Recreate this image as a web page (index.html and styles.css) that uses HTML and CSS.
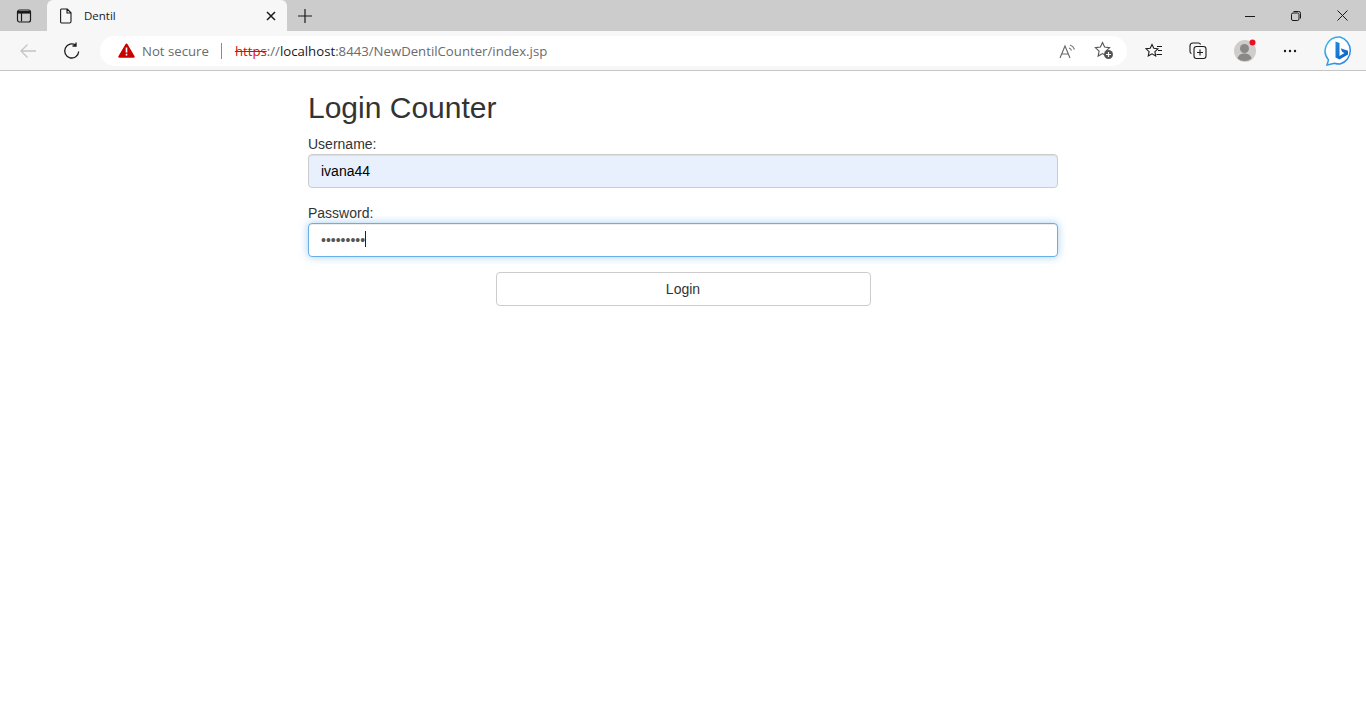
FILE: index.html
```html
<!DOCTYPE html>
<html lang="en">
<head>
    <meta charset="UTF-8">
    <title>Dentil</title>
    <link rel="stylesheet" href="styles.css">
</head>
<body>
    <div class="tabstrip">
        <div class="tab-actions">
            <svg class="icon" width="16" height="16" viewBox="0 0 16 16"><rect x="1.5" y="2" width="13" height="12" rx="2" fill="none" stroke="#1a1a1a" stroke-width="1.2"/><path d="M2 3h12v2.6H2z" fill="#1a1a1a"/><path d="M5.5 5v8.5" stroke="#1a1a1a" stroke-width="1.2"/></svg>
        </div>
        <div class="tab">
            <svg class="tab-page" width="12" height="16" viewBox="0 0 12 16"><path d="M1.5 1h5.8L11 4.8V13.5a1.5 1.5 0 0 1-1.5 1.5h-8A1 1 0 0 1 .6 14V2A1 1 0 0 1 1.5 1zM7 1v4h4" fill="none" stroke="#1a1a1a" stroke-width="1.1"/></svg>
            <span class="tab-title">Dentil</span>
            <svg class="tab-close" width="10" height="10" viewBox="0 0 10 10"><path d="M1 1l8 8M9 1l-8 8" stroke="#1a1a1a" stroke-width="1.5"/></svg>
        </div>
        <svg class="new-tab" width="14" height="14" viewBox="0 0 14 14"><path d="M7 0v14M0 7h14" stroke="#1a1a1a" stroke-width="1.2"/></svg>
        <div class="window-buttons">
            <svg width="10" height="10" viewBox="0 0 10 10"><path d="M0 5.5h10" stroke="#1a1a1a"/></svg>
            <svg width="10" height="10" viewBox="0 0 10 10"><rect x=".5" y="2" width="7.5" height="7.5" rx="1.5" fill="none" stroke="#1a1a1a"/><path d="M2.5 .5h5.2a1.8 1.8 0 0 1 1.8 1.8V7.5" fill="none" stroke="#1a1a1a"/></svg>
            <svg width="11" height="11" viewBox="0 0 11 11"><path d="M.5.5l10 10M10.500 .5l-10 10" stroke="#1a1a1a"/></svg>
        </div>
    </div>

    <div class="toolbar">
        <svg class="back" width="18" height="16" viewBox="0 0 18 16"><path d="M17 8H2M8.500 1.500L2 8l6.500 6.500" fill="none" stroke="#c4c4c4" stroke-width="1.300"/></svg>
        <svg class="reload" width="18" height="18" viewBox="0 0 18 18"><path d="M15.700 9.500A7 7 0 1 1 12.800 3.300M13 .5v3.500H9.500" fill="none" stroke="#1a1a1a" stroke-width="1.300"/></svg>
        <div class="addressbar">
            <svg class="warn" width="17" height="15" viewBox="0 0 17 15"><path d="M8.500 .5a1 1 0 0 1 .9.5l7.200 12.300a1 1 0 0 1-.9 1.500H1.300a1 1 0 0 1-.9-1.500L7.600 1a1 1 0 0 1 .9-.5z" fill="#c80000"/><path d="M7.700 4.500h1.600v5H7.700zM7.700 10.800h1.600v1.700H7.700z" fill="#fff"/></svg>
            <span class="not-secure">Not secure</span>
            <span class="addr-sep"></span>
            <span class="url"><s class="url-https">https</s><span class="url-dim">://</span><span class="url-host">localhost</span><span class="url-dim">:8443/NewDentilCounter/index.jsp</span></span>
            <div class="addr-icons">
                <svg width="18" height="16" viewBox="0 0 18 16"><path d="M1 15L6 3l5 12M2.800 11h6.400" fill="none" stroke="#666" stroke-width="1.100"/><path d="M10 5a4 4 0 0 1 2.500 2.500M11 2a7 7 0 0 1 4.500 4.500" fill="none" stroke="#777" stroke-width="1.100"/></svg>
                <svg width="20" height="19" viewBox="0 0 20 19"><path d="M8.500 1.500l2.100 4.600 5 .6-3.700 3.400 1 5-4.400-2.500-4.400 2.500 1-5L1.400 6.700l5-.6z" fill="none" stroke="#555" stroke-width="1.100"/><circle cx="14.500" cy="13.500" r="4.500" fill="#555"/><path d="M14.500 11v5M12 13.500h5" stroke="#fff" stroke-width="1.100"/></svg>
            </div>
        </div>
        <div class="tools">
            <svg class="tool-fav" width="18" height="16" viewBox="0 0 18 16"><path d="M7 1.500l1.800 3.800 4.200.5-3.100 2.900.8 4.200L7 10.800l-3.700 2.100.8-4.200L1 5.800l4.200-.5z" fill="none" stroke="#1a1a1a" stroke-width="1.100"/><path d="M12 3.500h5M13 7.500h4M11.500 11.500h5.500" stroke="#1a1a1a" stroke-width="1.100"/></svg>
            <svg class="tool-coll" width="18" height="18" viewBox="0 0 18 18"><path d="M2.500 11.500A2 2 0 0 1 1 9.500V4a3 3 0 0 1 3-3h5.500a2 2 0 0 1 2 1.500" fill="none" stroke="#1a1a1a" stroke-width="1.100"/><rect x="5" y="4.500" width="12" height="12" rx="2.500" fill="none" stroke="#1a1a1a" stroke-width="1.100"/><path d="M11 7.500v6M8 10.500h6" stroke="#1a1a1a" stroke-width="1.100"/></svg>
            <svg class="tool-avatar" width="24" height="24" viewBox="0 0 24 24"><circle cx="12" cy="12" r="11" fill="#cfcdcb"/><circle cx="11.500" cy="9.500" r="4.500" fill="#8a8886"/><path d="M4.500 19.500c1-3.800 4-5 7-5s6 1.200 7 5a11 11 0 0 1-14 0z" fill="#8a8886"/><circle cx="19.500" cy="3.500" r="3" fill="#e81123"/></svg>
            <svg class="tool-more" width="14" height="4" viewBox="0 0 14 4"><circle cx="2" cy="2" r="1.200" fill="#1a1a1a"/><circle cx="7" cy="2" r="1.200" fill="#1a1a1a"/><circle cx="12" cy="2" r="1.200" fill="#1a1a1a"/></svg>
            <svg class="tool-bing" width="32" height="32" viewBox="0 0 32 32">
                <defs>
                    <linearGradient id="bingB" x1="0" y1="0" x2="1" y2="1"><stop offset="0" stop-color="#1f8be0"/><stop offset="1" stop-color="#0f5fc0"/></linearGradient>
                    <linearGradient id="bingRing" x1="0" y1="0" x2="1" y2="1"><stop offset="0" stop-color="#35b8e8"/><stop offset="1" stop-color="#2f7fe6"/></linearGradient>
                </defs>
                <path d="M16 2a14 14 0 0 1 0 27c-2 0-4-.3-5.500-.8L3 30l1.500-5A14 14 0 0 1 16 2z" fill="#fff" stroke="url(#bingRing)" stroke-width="1.500"/>
                <path d="M11.500 6.500l4 1.400v13l5-2.800-2.300-1-1.500-3.800 7.300 2.500v3.800l-8.500 5-4-2.200z" fill="url(#bingB)"/>
            </svg>
        </div>
    </div>

    <div class="container">
        <h2 class="title">Login Counter</h2>
        <form>
            <div class="form-group">
                <label for="username">Username:</label>
                <input class="form-control filled" type="text" id="username" value="ivana44">
            </div>
            <div class="form-group">
                <label for="password">Password:</label>
                <div class="password-wrap">
                    <input class="form-control focused" type="password" id="password" value="ivana1234">
                    <span class="caret"></span>
                </div>
            </div>
            <div class="button-row">
                <button type="button" class="btn">Login</button>
            </div>
        </form>
    </div>
</body>
</html>
```

FILE: styles.css
```css
html, body {
    margin: 0;
    background: #fff;
}
body {
    font-family: "Liberation Sans", Arial, sans-serif;
    font-size: 14px;
    color: #333;
    height: 725px;
    overflow: hidden;
}
svg {
    display: block;
    flex: none;
}
.tabstrip {
    height: 31px;
    background: #cccccc;
    display: flex;
    align-items: flex-end;
}
.tab-actions {
    width: 47px;
    height: 31px;
    display: flex;
    align-items: center;
    justify-content: center;
}
.tab {
    width: 240px;
    height: 31px;
    box-sizing: border-box;
    background: #f7f7f7;
    border-radius: 6px 6px 0 0;
    display: flex;
    align-items: center;
    padding: 0 11px 0 13px;
}
.tab-title {
    font-family: "Open Sans", sans-serif;
    font-size: 11.500px;
    color: #1a1a1a;
    margin-left: 12px;
    flex: 1;
}
.new-tab {
    align-self: center;
    margin-left: 11px;
}
.window-buttons {
    margin-left: auto;
    height: 31px;
    display: flex;
    align-items: center;
    gap: 36px;
    padding-right: 18px;
}
.toolbar {
    height: 40px;
    box-sizing: border-box;
    background: #f7f7f7;
    border-bottom: 1px solid #c6c6c6;
    display: flex;
    align-items: center;
}
.back {
    margin-left: 19px;
}
.reload {
    margin-left: 26px;
}
.addressbar {
    width: 1027px;
    height: 30px;
    margin-left: 19px;
    background: #fff;
    border-radius: 15px;
    display: flex;
    align-items: center;
    font-family: "Open Sans", sans-serif;
    font-size: 13.200px;
}
.warn {
    margin-left: 18px;
}
.not-secure {
    margin-left: 7px;
    color: #6b6b6b;
}
.addr-sep {
    width: 1px;
    height: 16px;
    background: #8a8a8a;
    margin: 0 13px 0 12px;
}
.url {
    white-space: nowrap;
}
.url-https {
    color: #d01010;
}
.url-dim {
    color: #6b6b6b;
}
.url-host {
    color: #1a1a1a;
}
.addr-icons {
    margin-left: auto;
    display: flex;
    align-items: center;
    gap: 17px;
    padding-right: 13px;
}
.tools {
    display: flex;
    align-items: center;
}
.tool-fav {
    margin-left: 18px;
}
.tool-coll {
    margin-left: 26px;
}
.tool-avatar {
    margin-left: 26px;
}
.tool-more {
    margin-left: 26px;
}
.tool-bing {
    margin-left: 27px;
}

.container {
    width: 750px;
    margin: 0 auto;
}
.title {
    font-size: 30px;
    font-weight: 500;
    line-height: 33px;
    margin: 20px 0 10px;
    color: #333;
}
.form-group {
    margin-bottom: 15px;
}
label {
    display: block;
    line-height: 20px;
    margin-bottom: 0;
    color: #333;
}
.form-control {
    display: block;
    width: 100%;
    height: 34px;
    box-sizing: border-box;
    padding: 6px 12px;
    font-family: "Liberation Sans", Arial, sans-serif;
    font-size: 14px;
    line-height: 20px;
    color: #555;
    background: #fff;
    border: 1px solid #ccc;
    border-radius: 4px;
    outline: none;
    box-shadow: inset 0 1px 1px rgba(0, 0, 0, .075);
}
.filled {
    background: #e8f0fe;
    color: #000;
}
.focused {
    border-color: #66afe9;
    box-shadow: inset 0 1px 1px rgba(0, 0, 0, .075), 0 0 8px rgba(102, 175, 233, .6);
}
.password-wrap {
    position: relative;
}
.caret {
    position: absolute;
    left: 57px;
    top: 8px;
    width: 1px;
    height: 16px;
    background: #222;
}
.button-row {
    display: flex;
    justify-content: center;
}
.btn {
    width: 375px;
    height: 34px;
    font-family: "Liberation Sans", Arial, sans-serif;
    font-size: 14px;
    color: #333;
    background: #fff;
    border: 1px solid #ccc;
    border-radius: 4px;
    padding: 6px 12px;
}
```
